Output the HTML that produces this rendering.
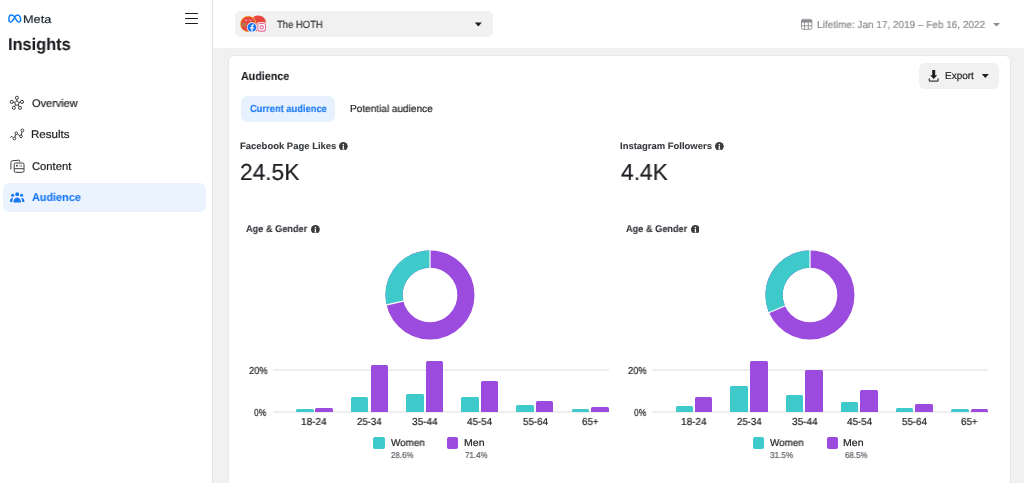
<!DOCTYPE html>
<html><head><meta charset="utf-8"><title>Insights - Audience</title>
<style>
html,body{margin:0;padding:0;width:1024px;height:483px;overflow:hidden;background:#fff;}
body{position:relative;font-family:"Liberation Sans", sans-serif;text-rendering:geometricPrecision;}
.t{position:absolute;white-space:nowrap;will-change:transform;}
.r{position:absolute;}
</style></head><body>
<div class="r" style="left:213.00px;top:48.00px;width:811.00px;height:435.00px;background:#f1f1f1;border-radius:0px;"></div>
<div class="r" style="left:212.00px;top:0.00px;width:1.00px;height:483.00px;background:#e2e2e2;border-radius:0px;"></div>
<div class="r" style="left:228.00px;top:55.00px;width:783.00px;height:465.00px;background:#ffffff;border-radius:6px;box-sizing:border-box;border:1px solid #e7e7e7;"></div>
<svg class="r" style="left:6px;top:12px" width="18" height="14" viewBox="6 12 18 14">
<path d="M11.2 14.9c-1.6 0-2.3 2.6-2.3 4.6 0 1.6.6 2.6 1.7 2.6 1.2 0 2-1.2 3.6-4l1.1-1.8c.9-1.2 1.6-1.4 2.4-1.4 1.6 0 2.9 2.4 2.9 4.6 0 1.6-.7 2.6-1.8 2.6-1 0-1.8-.9-3.3-3.4l-1.2-2c-.9-1.3-1.7-1.8-3.1-1.8z" fill="none" stroke="#0a7cff" stroke-width="1.45" stroke-linejoin="round"/></svg>
<div class="t" id="t1" style="left:23.15px;top:15.17px;font-size:11px;line-height:11px;font-weight:400;color:#1c2b33;transform:scaleX(1.1590);transform-origin:0 0;-webkit-text-stroke:0.2px currentColor;">Meta</div>
<div class="r" style="left:185.00px;top:12.60px;width:13.00px;height:1.60px;background:#1c1e21;border-radius:0.5px;"></div>
<div class="r" style="left:185.00px;top:17.80px;width:13.00px;height:1.60px;background:#1c1e21;border-radius:0.5px;"></div>
<div class="r" style="left:185.00px;top:22.60px;width:13.00px;height:1.60px;background:#1c1e21;border-radius:0.5px;"></div>
<div class="t" id="t2" style="left:8.10px;top:35.51px;font-size:17.0px;line-height:17.0px;font-weight:700;color:#1c1e21;transform:scaleX(0.9617);transform-origin:0 0;-webkit-text-stroke:0.1px currentColor;">Insights</div>
<div class="t" id="t3" style="left:31.69px;top:98.78px;font-size:11.2px;line-height:11.2px;font-weight:400;color:#1c1e21;transform:scaleX(0.9806);transform-origin:0 0;-webkit-text-stroke:0.2px currentColor;">Overview</div>
<div class="t" id="t4" style="left:31.33px;top:129.79px;font-size:11.2px;line-height:11.2px;font-weight:400;color:#1c1e21;transform:scaleX(1.0353);transform-origin:0 0;-webkit-text-stroke:0.2px currentColor;">Results</div>
<div class="t" id="t5" style="left:31.69px;top:161.69px;font-size:11.2px;line-height:11.2px;font-weight:400;color:#1c1e21;transform:scaleX(1.0042);transform-origin:0 0;-webkit-text-stroke:0.2px currentColor;">Content</div>
<div class="r" style="left:3.00px;top:183.00px;width:203.00px;height:29.00px;background:#ebf3fe;border-radius:6px;"></div>
<div class="t" id="t6" style="left:31.69px;top:193.03px;font-size:11.2px;line-height:11.2px;font-weight:700;color:#1877f2;transform:scaleX(0.9678);transform-origin:0 0;-webkit-text-stroke:0.1px currentColor;">Audience</div>
<svg class="r" style="left:6px;top:92px" width="24" height="22" viewBox="0 0 24 22" fill="none" stroke="#3b3d40" stroke-width="1">
<path d="M10.9 8.9L13.1 10.5 12.3 13.1H9.5L8.7 10.5z"/>
<circle cx="10.9" cy="5.8" r="1.55"/><circle cx="5.8" cy="9.9" r="1.55"/><circle cx="16" cy="9.9" r="1.55"/><circle cx="7.8" cy="15.8" r="1.55"/><circle cx="14" cy="15.8" r="1.55"/>
<path d="M10.9 7.35V8.9M7.3 10.2L8.7 10.5M14.5 10.2L13.1 10.5M8.6 14.4L9.5 13.1M13.2 14.4L12.3 13.1"/></svg>
<svg class="r" style="left:6px;top:124px" width="24" height="22" viewBox="0 0 24 22" fill="none" stroke="#3b3d40" stroke-width="1">
<path d="M4.3 13.5L5.9 12.3 7.2 13.6"/><circle cx="8.4" cy="14.5" r="1.35"/><path d="M8.9 13.2L9.7 10.6"/><circle cx="10.2" cy="9.3" r="1.35"/><path d="M11.4 10L13.8 11.6"/><circle cx="15" cy="12.3" r="1.35"/><path d="M15.3 11L16 7.8"/><circle cx="16.4" cy="6.4" r="1.4"/></svg>
<svg class="r" style="left:6px;top:155px" width="24" height="22" viewBox="0 0 24 22" fill="none" stroke="#3b3d40" stroke-width="1">
<path d="M4.9 14.4V7.3c0-.8.5-1.4 1.3-1.5l6.4-.6c.7 0 1.1.4 1.1 1v.8"/><rect x="8.2" y="8" width="9.8" height="9.3" rx="1.4"/><path d="M8.2 13.7H18"/><circle cx="10.9" cy="10.8" r="0.95" fill="#3b3d40" stroke="none"/><path d="M14 9.7v2.2M15.6 9.7v2.2" stroke-width="0.9" stroke="#8a8d91"/></svg>
<svg class="r" style="left:6px;top:186px" width="24" height="22" viewBox="0 0 24 22" fill="#1877f2">
<circle cx="11.2" cy="8.2" r="1.95"/><circle cx="6.6" cy="9.3" r="1.55"/><circle cx="15.6" cy="9.3" r="1.55"/>
<path d="M7.4 16.6c0-3 1.6-5.2 3.8-5.2s3.8 2.2 3.8 5.2z"/><path d="M4 15.9c0-2.2.9-3.8 2.4-3.8.3 0 .5 0 .7.1-.5.9-.8 2.2-.8 3.7z"/><path d="M18.4 15.9c0-2.2-.9-3.8-2.4-3.8-.3 0-.5 0-.7.1.5.9.8 2.2.8 3.7z"/></svg>
<div class="r" style="left:235.00px;top:11.00px;width:258.00px;height:26.00px;background:#f1f1f1;border-radius:5px;"></div>
<svg class="r" style="left:236px;top:12px" width="34" height="24" viewBox="236 12 34 24">
<circle cx="258.2" cy="23.5" r="8.1" fill="#e8453c"/>
<circle cx="248.2" cy="24" r="8.2" fill="#f4c84a"/>
<circle cx="248.2" cy="24" r="7.5" fill="#e8453c"/>
<path d="M241 23h5.2v3.6H242z" fill="#b07a50"/>
<path d="M245.2 20.4h1.8M249.4 20.4h1.8" stroke="#f6d0cc" stroke-width="0.9"/>
<rect x="256.6" y="22.3" width="10.2" height="10" rx="2.6" fill="#fff"/>
<rect x="257.8" y="23.5" width="7.8" height="7.6" rx="2" fill="none" stroke="#e56a9a" stroke-width="1.1"/>
<circle cx="261.7" cy="27.3" r="1.7" fill="none" stroke="#e56a9a" stroke-width="1.1"/>
<circle cx="251.9" cy="27.3" r="5.1" fill="#fff"/>
<circle cx="251.9" cy="27.3" r="4.4" fill="#1877f2"/>
<path d="M252.6 31.7v-3.3h1.1l.2-1.3h-1.3v-.8c0-.4.1-.6.6-.6h.7v-1.2c-.2 0-.5-.1-1-.1-1 0-1.6.6-1.6 1.7v1h-1.1v1.3h1.1v3.3z" fill="#fff"/>
</svg>
<div class="t" id="t7" style="left:276.78px;top:20.86px;font-size:10.4px;line-height:10.4px;font-weight:400;color:#35383c;transform:scaleX(0.9091);transform-origin:0 0;-webkit-text-stroke:0.2px currentColor;">The HOTH</div>
<svg class="r" style="left:474px;top:22px" width="9" height="6" viewBox="0 0 9 6"><path d="M0.8 0.4h7L4.3 4.6z" fill="#1c1e21"/></svg>
<svg class="r" style="left:797px;top:15px" width="18" height="18" viewBox="797 15 18 18" fill="none" stroke="#8a8d91" stroke-width="0.9">
<rect x="801.5" y="19.3" width="10.4" height="10" rx="1.6"/><path d="M801.5 21.3h10.4" stroke-width="2.6"/><path d="M804.6 22.5v6.8M808.3 22.5v6.8M801.5 25.8h10.4"/></svg>
<div class="t" id="t8" style="left:817.19px;top:20.77px;font-size:10.2px;line-height:10.2px;font-weight:400;color:#8a8d91;transform:scaleX(0.9794);transform-origin:0 0;-webkit-text-stroke:0.2px currentColor;">Lifetime: Jan 17, 2019 – Feb 16, 2022</div>
<svg class="r" style="left:992px;top:22px" width="9" height="6" viewBox="0 0 9 6"><path d="M1 1h7L4.5 4.4z" fill="#8a8d91"/></svg>
<div class="t" id="t9" style="left:240.66px;top:70.54px;font-size:11.6px;line-height:11.6px;font-weight:700;color:#1c1e21;transform:scaleX(0.9246);transform-origin:0 0;-webkit-text-stroke:0.1px currentColor;">Audience</div>
<div class="r" style="left:919.00px;top:63.00px;width:80.00px;height:26.00px;background:#f1f1f1;border-radius:6px;"></div>
<svg class="r" style="left:925px;top:66px" width="18" height="18" viewBox="925 66 18 18" fill="#1c1e21">
<path d="M932.2 69.9h3v5.3h2l-3.5 3.9-3.5-3.9h2z"/><path d="M929.3 78.6v1.6c0 .6.4 1 1 1h6.8c.6 0 1-.4 1-1v-1.6" fill="none" stroke="#3b3d40" stroke-width="1.3"/></svg>
<div class="t" id="t10" style="left:945.00px;top:71.94px;font-size:10px;line-height:10px;font-weight:400;color:#1c1e21;-webkit-text-stroke:0.2px currentColor;">Export</div>
<svg class="r" style="left:981px;top:73px" width="9" height="6" viewBox="0 0 9 6"><path d="M0.8 1h7L4.3 5z" fill="#1c1e21"/></svg>
<div class="r" style="left:241.00px;top:96.00px;width:94.00px;height:25.50px;background:#e8f2fe;border-radius:6px;"></div>
<div class="t" id="t11" style="left:249.92px;top:104.71px;font-size:10.2px;line-height:10.2px;font-weight:700;color:#1877f2;transform:scaleX(0.9173);transform-origin:0 0;-webkit-text-stroke:0.1px currentColor;">Current audience</div>
<div class="t" id="t12" style="left:350.09px;top:105.01px;font-size:10.2px;line-height:10.2px;font-weight:400;color:#1c1e21;transform:scaleX(0.9864);transform-origin:0 0;-webkit-text-stroke:0.2px currentColor;">Potential audience</div>
<div class="t" id="t13" style="left:239.92px;top:142.02px;font-size:9.2px;line-height:9.2px;font-weight:700;color:#35383c;transform:scaleX(1.0311);transform-origin:0 0;-webkit-text-stroke:0.1px currentColor;">Facebook Page Likes</div>
<svg class="r" style="left:339px;top:141.5px" width="8.7" height="8.7" viewBox="0 0 10 10"><circle cx="5" cy="5" r="5" fill="#3a3b3d"/><circle cx="5" cy="2.8" r="0.9" fill="#fff"/><path d="M4.2 4.3h1.5v3.4h0.6v0.8H3.8v-0.8h0.5V5.1h-0.4z" fill="#fff"/></svg>
<div class="t" id="t14" style="left:240.43px;top:161.06px;font-size:23.2px;line-height:23.2px;font-weight:400;color:#1c1e21;transform:scaleX(0.9787);transform-origin:0 0;-webkit-text-stroke:0.2px currentColor;">24.5K</div>
<div class="t" id="t15" style="left:246.29px;top:224.80px;font-size:9.8px;line-height:9.8px;font-weight:700;color:#35383c;transform:scaleX(0.9384);transform-origin:0 0;-webkit-text-stroke:0.1px currentColor;">Age &amp; Gender</div>
<svg class="r" style="left:311.2px;top:224.6px" width="8.8" height="8.8" viewBox="0 0 10 10"><circle cx="5" cy="5" r="5" fill="#3a3b3d"/><circle cx="5" cy="2.8" r="0.9" fill="#fff"/><path d="M4.2 4.3h1.5v3.4h0.6v0.8H3.8v-0.8h0.5V5.1h-0.4z" fill="#fff"/></svg>
<svg class="r" style="left:380.30px;top:245.00px" width="100" height="100" viewBox="0 0 100 100">
<circle cx="50" cy="50" r="35.9" fill="none" stroke="#9b4bdd" stroke-width="17.2"/>
<circle cx="50" cy="50" r="35.9" fill="none" stroke="#3ec9ca" stroke-width="17.2" stroke-dasharray="64.512 225.566" transform="rotate(-192.960 50 50)"/>
<line x1="50" y1="4.500000000000002" x2="50" y2="23.700000000000003" stroke="#fff" stroke-width="1.2"/>
<line x1="50" y1="4.500000000000002" x2="50" y2="23.700000000000003" stroke="#fff" stroke-width="1.2" transform="rotate(-102.960 50 50)"/>
</svg>
<div class="r" style="left:272.80px;top:369.00px;width:335.90px;height:2.00px;background:#eeeeee;border-radius:0px;"></div>
<div class="r" style="left:272.80px;top:411.00px;width:335.90px;height:2.00px;background:#eeeeee;border-radius:0px;"></div>
<div class="t" id="t16" style="left:248.75px;top:366.85px;font-size:10.2px;line-height:10.2px;font-weight:400;color:#1c1e21;transform:scaleX(0.9160);transform-origin:0 0;-webkit-text-stroke:0.2px currentColor;">20%</div>
<div class="t" id="t17" style="left:254.09px;top:408.63px;font-size:10.2px;line-height:10.2px;font-weight:400;color:#1c1e21;transform:scaleX(0.8228);transform-origin:0 0;-webkit-text-stroke:0.2px currentColor;">0%</div>
<div class="r" style="left:296.30px;top:409.20px;width:17.50px;height:3.00px;background:#3ec9ca;border-radius:0px;border-radius:1.5px 1.5px 0 0;"></div>
<div class="r" style="left:315.20px;top:408.20px;width:17.50px;height:4.00px;background:#9b4bdd;border-radius:0px;border-radius:1.5px 1.5px 0 0;"></div>
<div class="t" id="t18" style="left:301.20px;top:417.65px;font-size:10.2px;line-height:10.2px;font-weight:400;color:#1c1e21;transform:scaleX(0.9776);transform-origin:0 0;-webkit-text-stroke:0.2px currentColor;">18-24</div>
<div class="r" style="left:350.90px;top:397.30px;width:17.50px;height:14.90px;background:#3ec9ca;border-radius:0px;border-radius:1.5px 1.5px 0 0;"></div>
<div class="r" style="left:370.50px;top:364.60px;width:17.50px;height:47.60px;background:#9b4bdd;border-radius:0px;border-radius:1.5px 1.5px 0 0;"></div>
<div class="t" id="t19" style="left:356.69px;top:417.65px;font-size:10.2px;line-height:10.2px;font-weight:400;color:#1c1e21;transform:scaleX(0.9408);transform-origin:0 0;-webkit-text-stroke:0.2px currentColor;">25-34</div>
<div class="r" style="left:406.00px;top:393.90px;width:17.50px;height:18.30px;background:#3ec9ca;border-radius:0px;border-radius:1.5px 1.5px 0 0;"></div>
<div class="r" style="left:425.50px;top:360.70px;width:17.50px;height:51.50px;background:#9b4bdd;border-radius:0px;border-radius:1.5px 1.5px 0 0;"></div>
<div class="t" id="t20" style="left:411.87px;top:417.65px;font-size:10.2px;line-height:10.2px;font-weight:400;color:#1c1e21;transform:scaleX(0.9791);transform-origin:0 0;-webkit-text-stroke:0.2px currentColor;">35-44</div>
<div class="r" style="left:461.00px;top:397.30px;width:17.50px;height:14.90px;background:#3ec9ca;border-radius:0px;border-radius:1.5px 1.5px 0 0;"></div>
<div class="r" style="left:480.50px;top:380.90px;width:17.50px;height:31.30px;background:#9b4bdd;border-radius:0px;border-radius:1.5px 1.5px 0 0;"></div>
<div class="t" id="t21" style="left:466.69px;top:417.65px;font-size:10.2px;line-height:10.2px;font-weight:400;color:#1c1e21;transform:scaleX(0.9623);transform-origin:0 0;-webkit-text-stroke:0.2px currentColor;">45-54</div>
<div class="r" style="left:516.30px;top:405.30px;width:17.50px;height:6.90px;background:#3ec9ca;border-radius:0px;border-radius:1.5px 1.5px 0 0;"></div>
<div class="r" style="left:535.80px;top:400.80px;width:17.50px;height:11.40px;background:#9b4bdd;border-radius:0px;border-radius:1.5px 1.5px 0 0;"></div>
<div class="t" id="t22" style="left:523.09px;top:417.65px;font-size:10.2px;line-height:10.2px;font-weight:400;color:#1c1e21;transform:scaleX(0.9557);transform-origin:0 0;-webkit-text-stroke:0.2px currentColor;">55-64</div>
<div class="r" style="left:571.60px;top:408.60px;width:17.50px;height:3.60px;background:#3ec9ca;border-radius:0px;border-radius:1.5px 1.5px 0 0;"></div>
<div class="r" style="left:591.00px;top:407.20px;width:17.50px;height:5.00px;background:#9b4bdd;border-radius:0px;border-radius:1.5px 1.5px 0 0;"></div>
<div class="t" id="t23" style="left:581.83px;top:417.65px;font-size:10.2px;line-height:10.2px;font-weight:400;color:#1c1e21;transform:scaleX(0.9600);transform-origin:0 0;-webkit-text-stroke:0.2px currentColor;">65+</div>
<div class="r" style="left:373.00px;top:437.00px;width:11.60px;height:11.50px;background:#3ec9ca;border-radius:2px;"></div>
<div class="t" id="t24" style="left:390.76px;top:438.54px;font-size:10px;line-height:10px;font-weight:400;color:#1c1e21;transform:scaleX(0.9835);transform-origin:0 0;-webkit-text-stroke:0.2px currentColor;">Women</div>
<div class="t" id="t25" style="left:390.84px;top:451.22px;font-size:8.6px;line-height:8.6px;font-weight:400;color:#5b5f65;transform:scaleX(0.9244);transform-origin:0 0;-webkit-text-stroke:0.2px currentColor;">28.6%</div>
<div class="r" style="left:447.20px;top:437.00px;width:11.20px;height:11.50px;background:#9b4bdd;border-radius:2px;"></div>
<div class="t" id="t26" style="left:464.40px;top:438.54px;font-size:10px;line-height:10px;font-weight:400;color:#1c1e21;transform:scaleX(1.0552);transform-origin:0 0;-webkit-text-stroke:0.2px currentColor;">Men</div>
<div class="t" id="t27" style="left:465.18px;top:451.22px;font-size:8.6px;line-height:8.6px;font-weight:400;color:#5b5f65;transform:scaleX(0.9244);transform-origin:0 0;-webkit-text-stroke:0.2px currentColor;">71.4%</div>
<div class="t" id="t28" style="left:620.35px;top:142.02px;font-size:9.2px;line-height:9.2px;font-weight:700;color:#35383c;transform:scaleX(1.0287);transform-origin:0 0;-webkit-text-stroke:0.1px currentColor;">Instagram Followers</div>
<svg class="r" style="left:715.2px;top:141.5px" width="8.7" height="8.7" viewBox="0 0 10 10"><circle cx="5" cy="5" r="5" fill="#3a3b3d"/><circle cx="5" cy="2.8" r="0.9" fill="#fff"/><path d="M4.2 4.3h1.5v3.4h0.6v0.8H3.8v-0.8h0.5V5.1h-0.4z" fill="#fff"/></svg>
<div class="t" id="t29" style="left:620.75px;top:161.06px;font-size:23.2px;line-height:23.2px;font-weight:400;color:#1c1e21;transform:scaleX(0.9806);transform-origin:0 0;-webkit-text-stroke:0.2px currentColor;">4.4K</div>
<div class="t" id="t30" style="left:625.51px;top:224.80px;font-size:9.8px;line-height:9.8px;font-weight:700;color:#35383c;transform:scaleX(0.9384);transform-origin:0 0;-webkit-text-stroke:0.1px currentColor;">Age &amp; Gender</div>
<svg class="r" style="left:690.7px;top:224.6px" width="8.8" height="8.8" viewBox="0 0 10 10"><circle cx="5" cy="5" r="5" fill="#3a3b3d"/><circle cx="5" cy="2.8" r="0.9" fill="#fff"/><path d="M4.2 4.3h1.5v3.4h0.6v0.8H3.8v-0.8h0.5V5.1h-0.4z" fill="#fff"/></svg>
<svg class="r" style="left:759.80px;top:245.00px" width="100" height="100" viewBox="0 0 100 100">
<circle cx="50" cy="50" r="35.9" fill="none" stroke="#9b4bdd" stroke-width="17.2"/>
<circle cx="50" cy="50" r="35.9" fill="none" stroke="#3ec9ca" stroke-width="17.2" stroke-dasharray="71.053 225.566" transform="rotate(-203.400 50 50)"/>
<line x1="50" y1="4.500000000000002" x2="50" y2="23.700000000000003" stroke="#fff" stroke-width="1.2"/>
<line x1="50" y1="4.500000000000002" x2="50" y2="23.700000000000003" stroke="#fff" stroke-width="1.2" transform="rotate(-113.400 50 50)"/>
</svg>
<div class="r" style="left:652.30px;top:369.00px;width:335.90px;height:2.00px;background:#eeeeee;border-radius:0px;"></div>
<div class="r" style="left:652.30px;top:411.00px;width:335.90px;height:2.00px;background:#eeeeee;border-radius:0px;"></div>
<div class="t" id="t31" style="left:627.69px;top:366.85px;font-size:10.2px;line-height:10.2px;font-weight:400;color:#1c1e21;transform:scaleX(0.9160);transform-origin:0 0;-webkit-text-stroke:0.2px currentColor;">20%</div>
<div class="t" id="t32" style="left:633.59px;top:408.63px;font-size:10.2px;line-height:10.2px;font-weight:400;color:#1c1e21;transform:scaleX(0.8228);transform-origin:0 0;-webkit-text-stroke:0.2px currentColor;">0%</div>
<div class="r" style="left:675.80px;top:405.70px;width:17.50px;height:6.50px;background:#3ec9ca;border-radius:0px;border-radius:1.5px 1.5px 0 0;"></div>
<div class="r" style="left:694.70px;top:396.50px;width:17.50px;height:15.70px;background:#9b4bdd;border-radius:0px;border-radius:1.5px 1.5px 0 0;"></div>
<div class="t" id="t33" style="left:681.19px;top:417.65px;font-size:10.2px;line-height:10.2px;font-weight:400;color:#1c1e21;transform:scaleX(0.9776);transform-origin:0 0;-webkit-text-stroke:0.2px currentColor;">18-24</div>
<div class="r" style="left:730.40px;top:386.10px;width:17.50px;height:26.10px;background:#3ec9ca;border-radius:0px;border-radius:1.5px 1.5px 0 0;"></div>
<div class="r" style="left:750.00px;top:360.70px;width:17.50px;height:51.50px;background:#9b4bdd;border-radius:0px;border-radius:1.5px 1.5px 0 0;"></div>
<div class="t" id="t34" style="left:736.75px;top:417.65px;font-size:10.2px;line-height:10.2px;font-weight:400;color:#1c1e21;transform:scaleX(0.9408);transform-origin:0 0;-webkit-text-stroke:0.2px currentColor;">25-34</div>
<div class="r" style="left:785.50px;top:394.50px;width:17.50px;height:17.70px;background:#3ec9ca;border-radius:0px;border-radius:1.5px 1.5px 0 0;"></div>
<div class="r" style="left:805.00px;top:370.10px;width:17.50px;height:42.10px;background:#9b4bdd;border-radius:0px;border-radius:1.5px 1.5px 0 0;"></div>
<div class="t" id="t35" style="left:791.58px;top:417.65px;font-size:10.2px;line-height:10.2px;font-weight:400;color:#1c1e21;transform:scaleX(0.9791);transform-origin:0 0;-webkit-text-stroke:0.2px currentColor;">35-44</div>
<div class="r" style="left:840.50px;top:402.30px;width:17.50px;height:9.90px;background:#3ec9ca;border-radius:0px;border-radius:1.5px 1.5px 0 0;"></div>
<div class="r" style="left:860.00px;top:390.00px;width:17.50px;height:22.20px;background:#9b4bdd;border-radius:0px;border-radius:1.5px 1.5px 0 0;"></div>
<div class="t" id="t36" style="left:846.75px;top:417.65px;font-size:10.2px;line-height:10.2px;font-weight:400;color:#1c1e21;transform:scaleX(0.9623);transform-origin:0 0;-webkit-text-stroke:0.2px currentColor;">45-54</div>
<div class="r" style="left:895.80px;top:408.00px;width:17.50px;height:4.20px;background:#3ec9ca;border-radius:0px;border-radius:1.5px 1.5px 0 0;"></div>
<div class="r" style="left:915.30px;top:404.10px;width:17.50px;height:8.10px;background:#9b4bdd;border-radius:0px;border-radius:1.5px 1.5px 0 0;"></div>
<div class="t" id="t37" style="left:901.89px;top:417.65px;font-size:10.2px;line-height:10.2px;font-weight:400;color:#1c1e21;transform:scaleX(0.9557);transform-origin:0 0;-webkit-text-stroke:0.2px currentColor;">55-64</div>
<div class="r" style="left:951.10px;top:409.20px;width:17.50px;height:3.00px;background:#3ec9ca;border-radius:0px;border-radius:1.5px 1.5px 0 0;"></div>
<div class="r" style="left:970.50px;top:409.20px;width:17.50px;height:3.00px;background:#9b4bdd;border-radius:0px;border-radius:1.5px 1.5px 0 0;"></div>
<div class="t" id="t38" style="left:961.26px;top:417.65px;font-size:10.2px;line-height:10.2px;font-weight:400;color:#1c1e21;transform:scaleX(0.9600);transform-origin:0 0;-webkit-text-stroke:0.2px currentColor;">65+</div>
<div class="r" style="left:752.50px;top:437.00px;width:11.60px;height:11.50px;background:#3ec9ca;border-radius:2px;"></div>
<div class="t" id="t39" style="left:769.70px;top:438.54px;font-size:10px;line-height:10px;font-weight:400;color:#1c1e21;transform:scaleX(0.9835);transform-origin:0 0;-webkit-text-stroke:0.2px currentColor;">Women</div>
<div class="t" id="t40" style="left:770.20px;top:451.22px;font-size:8.6px;line-height:8.6px;font-weight:400;color:#5b5f65;transform:scaleX(0.9519);transform-origin:0 0;-webkit-text-stroke:0.2px currentColor;">31.5%</div>
<div class="r" style="left:826.70px;top:437.00px;width:11.20px;height:11.50px;background:#9b4bdd;border-radius:2px;"></div>
<div class="t" id="t41" style="left:843.20px;top:438.54px;font-size:10px;line-height:10px;font-weight:400;color:#1c1e21;transform:scaleX(1.0552);transform-origin:0 0;-webkit-text-stroke:0.2px currentColor;">Men</div>
<div class="t" id="t42" style="left:844.68px;top:451.22px;font-size:8.6px;line-height:8.6px;font-weight:400;color:#5b5f65;transform:scaleX(0.9244);transform-origin:0 0;-webkit-text-stroke:0.2px currentColor;">68.5%</div>
</body></html>
